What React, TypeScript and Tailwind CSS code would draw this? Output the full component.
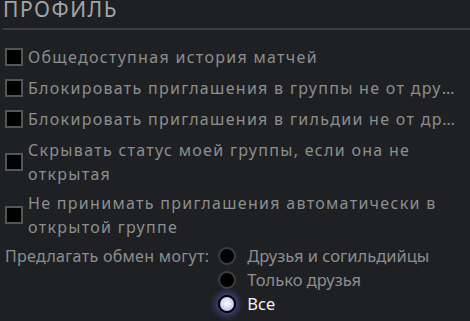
import React from "react";

const font = { fontFamily: '"Noto Sans", "Open Sans", sans-serif' };

function Box() {
  return <div className="w-[18px] h-[18px] shrink-0 border-2 border-[#515755] bg-black box-border" />;
}

function Row({ children, two }: { children: React.ReactNode; two?: boolean }) {
  return (
    <div className="flex items-center gap-[5px]">
      <Box />
      <div
        className={`text-[16px] leading-[24px] tracking-[1.3px] text-[#8b8f8e] ${two ? "" : "whitespace-nowrap overflow-hidden text-ellipsis"} min-w-0`}
      >
        {children}
      </div>
    </div>
  );
}

function Radio({ label, on }: { label: string; on?: boolean }) {
  return (
    <div className="flex items-center gap-[11px] h-[24px]">
      {on ? (
        <div className="w-[18px] h-[18px] rounded-full border-2 border-black bg-[radial-gradient(circle_at_50%_45%,#ffffff_0%,#d8dbf5_45%,#a9add8_100%)] shadow-[0_0_6px_3px_rgba(90,95,200,0.55)] shrink-0" />
      ) : (
        <div className="w-[18px] h-[18px] rounded-full border-2 border-[#3b403e] bg-black shrink-0" />
      )}
      <span className={`text-[16.5px] leading-[24px] ${on ? "text-[#f2f2f2]" : "text-[#8b8f8e]"}`}>{label}</span>
    </div>
  );
}

export default function App() {
  return (
    <div className="w-[470px] h-[321px] bg-[#1f2023] overflow-hidden" style={font}>
      <div className="pl-[3px]">
        <div className="mt-[-6px] text-[21px] leading-[30px] tracking-[1.5px] text-[#a2a6a8]">ПРОФИЛЬ</div>
        <div className="mt-[4px] h-[2px] bg-[#3c3f42]" />
      </div>
      <div className="pl-[5px] pr-[12px] pt-[15px] flex flex-col gap-[7px]">
        <Row>Общедоступная история матчей</Row>
        <Row>Блокировать приглашения в группы не от друзей</Row>
        <Row>Блокировать приглашения в гильдии не от друзей</Row>
        <Row two>Скрывать статус моей группы, если она не открытая</Row>
        <div className="-mt-[2px]">
          <Row two>Не принимать приглашения автоматически в открытой группе</Row>
        </div>
        <div className="flex gap-[9px] -mt-[2px]">
          <div className="text-[16px] leading-[24px] tracking-[0.3px] text-[#8b8f8e] whitespace-nowrap">Предлагать обмен могут:</div>
          <div className="flex flex-col">
            <Radio label="Друзья и согильдийцы" />
            <Radio label="Только друзья" />
            <Radio label="Все" on />
          </div>
        </div>
      </div>
    </div>
  );
}
